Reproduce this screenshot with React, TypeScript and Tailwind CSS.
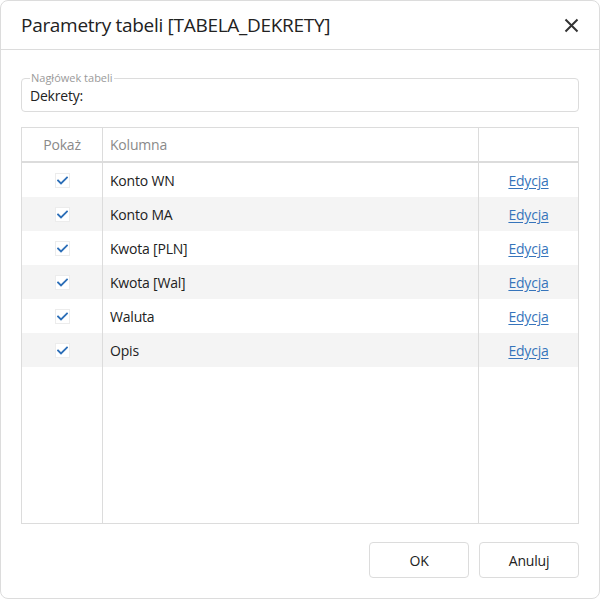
import React from 'react';

const rows = ['Konto WN', 'Konto MA', 'Kwota [PLN]', 'Kwota [Wal]', 'Waluta', 'Opis'];

function CheckBox() {
  return (
    <span className="flex h-[15px] w-[15px] items-center justify-center border border-[#ececec] bg-white">
      <svg width="11" height="9" viewBox="0 0 11 9" fill="none">
        <path d="M1 4.5 L4 7.5 L10 1.5" stroke="#2d6fb8" strokeWidth="1.8" strokeLinecap="square" />
      </svg>
    </span>
  );
}

export default function App() {
  return (
    <div
      className="flex h-[599px] w-[600px] flex-col rounded-lg border border-[#dcdcdc] bg-white text-[#222]"
      style={{ fontFamily: '"Open Sans", "Noto Sans", sans-serif' }}
    >
      {/* header */}
      <div className="flex h-[49px] shrink-0 items-center justify-between border-b border-[#dcdcdc] pl-5 pr-[20px]">
        <h1 className="text-[19px] leading-none tracking-[-0.3px] text-[#222]">Parametry tabeli [TABELA_DEKRETY]</h1>
        <button className="flex h-[16px] w-[16px] items-center justify-center">
          <svg width="15" height="15" viewBox="0 0 15 15">
            <path d="M1.5 1.5 L13.5 13.5 M13.5 1.5 L1.5 13.5" stroke="#333" strokeWidth="2" />
          </svg>
        </button>
      </div>

      <div className="flex flex-1 flex-col px-5 pb-5 tracking-[-0.2px]">
        <fieldset className="mt-[22px] rounded-[4px] border border-[#dcdcdc] px-[8px] pb-[6px]">
          <legend className="px-[1px] text-[11px] leading-[12px] tracking-normal text-[#9a9a9a]">Nagłówek tabeli</legend>
          <div className="mt-[3px] text-[14px] leading-[18px] text-[#222]">Dekrety:</div>
        </fieldset>

        {/* table */}
        <div className="mt-[15px] flex h-[397px] flex-col border border-[#dcdcdc] text-[14px]">
          <div className="grid h-[35px] shrink-0 grid-cols-[81px_376px_1fr] border-b-2 border-[#dcdcdc] text-[#8a8a8a]">
            <div className="flex items-center justify-center border-r border-[#dcdcdc]">Pokaż</div>
            <div className="flex items-center border-r border-[#dcdcdc] pl-[7px]">Kolumna</div>
            <div />
          </div>
          {rows.map((r, i) => (
            <div
              key={r}
              className={`grid h-[34px] shrink-0 grid-cols-[81px_376px_1fr] ${i % 2 === 1 ? 'bg-[#f4f4f4]' : 'bg-white'}`}
            >
              <div className="flex items-center justify-center border-r border-[#dcdcdc]">
                <CheckBox />
              </div>
              <div className="flex items-center border-r border-[#dcdcdc] pl-[7px] text-[#222]">{r}</div>
              <div className="flex items-center justify-center">
                <a href="#" className="text-[#3674bb] underline underline-offset-2">Edycja</a>
              </div>
            </div>
          ))}
          <div className="grid flex-1 grid-cols-[81px_376px_1fr]">
            <div className="border-r border-[#dcdcdc]" />
            <div className="border-r border-[#dcdcdc]" />
            <div />
          </div>
        </div>

        <div className="mt-auto flex justify-end gap-[10px]">
          <button className="h-[36px] w-[100px] rounded-[4px] border border-[#dcdcdc] bg-white text-[14px] text-[#222]">OK</button>
          <button className="h-[36px] w-[100px] rounded-[4px] border border-[#dcdcdc] bg-white text-[14px] text-[#222]">Anuluj</button>
        </div>
      </div>
    </div>
  );
}
